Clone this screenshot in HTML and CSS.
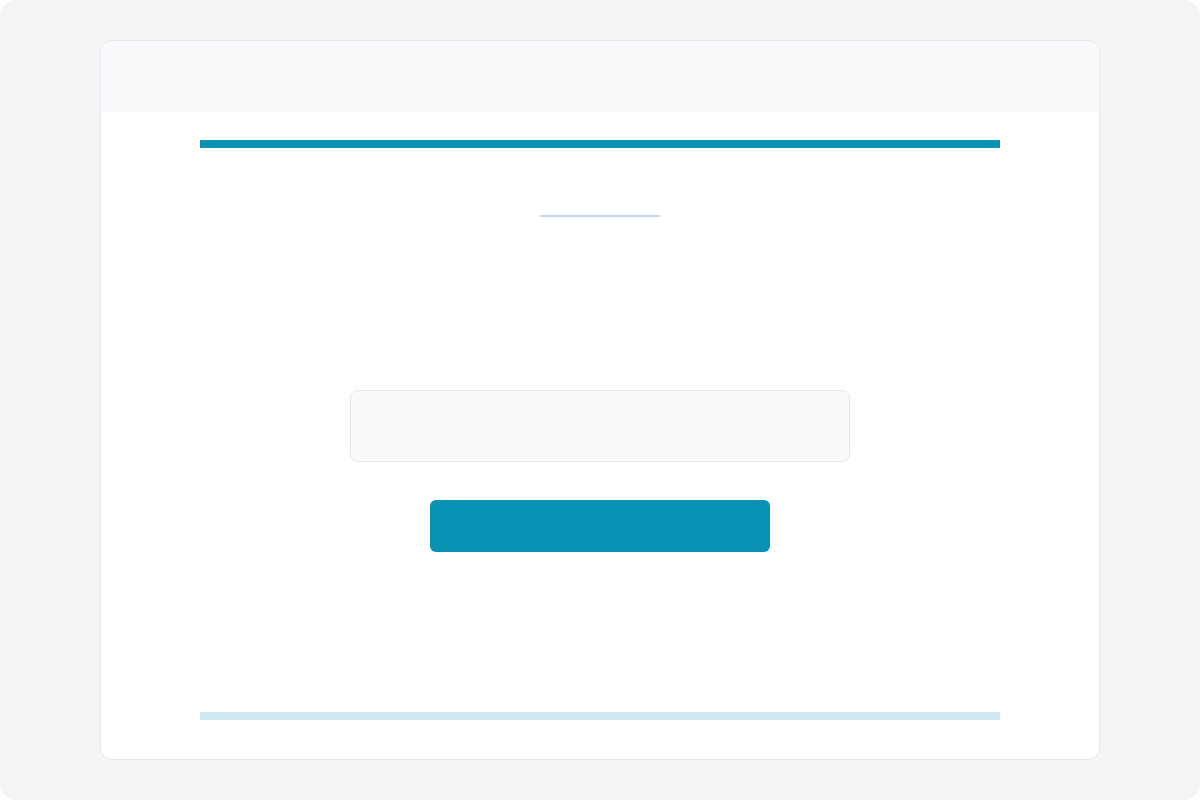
FILE: index.html
```html
<!DOCTYPE html>
<html>
<head>
<meta charset="utf-8">
<link rel="stylesheet" href="styles.css">
</head>
<body>
<div class="page">
  <div class="card">
    <div class="card-header"></div>
    <div class="card-body">
      <div class="bar-top"></div>
      <div class="rule"></div>
      <div class="field"></div>
      <div class="button"></div>
      <div class="bar-bottom"></div>
    </div>
  </div>
</div>
</body>
</html>
```

FILE: styles.css
```css
html, body {
  margin: 0;
  padding: 0;
  background: #ffffff;
  font-family: "Inter", "Liberation Sans", sans-serif;
}
.page {
  width: 1200px;
  height: 800px;
  box-sizing: border-box;
  background: #f3f4f6;
  border-radius: 16px;
  padding: 40px 100px;
}
.card {
  height: 720px;
  box-sizing: border-box;
  background: #ffffff;
  border: 1px solid #e5e7eb;
  border-radius: 12px;
  overflow: hidden;
  display: flex;
  flex-direction: column;
}
.card-header {
  height: 71px;
  background: #f9fafb;
  flex: none;
}
.card-body {
  flex: 1;
  display: flex;
  flex-direction: column;
  align-items: center;
  padding: 28px 99px 0;
}
.bar-top {
  align-self: stretch;
  height: 8px;
  background: #0891b2;
}
.rule {
  width: 120px;
  height: 2px;
  border-radius: 1px;
  background: #b8dde5;
  margin-top: 67px;
}
.field {
  width: 500px;
  height: 72px;
  box-sizing: border-box;
  background: #f9fafb;
  border: 1px solid #e5e7eb;
  border-radius: 8px;
  margin-top: 173px;
}
.button {
  width: 340px;
  height: 52px;
  background: #0891b2;
  border-radius: 6px;
  margin-top: 38px;
}
.bar-bottom {
  align-self: stretch;
  height: 8px;
  background: #cee8ef;
  margin-top: 160px;
}
```
